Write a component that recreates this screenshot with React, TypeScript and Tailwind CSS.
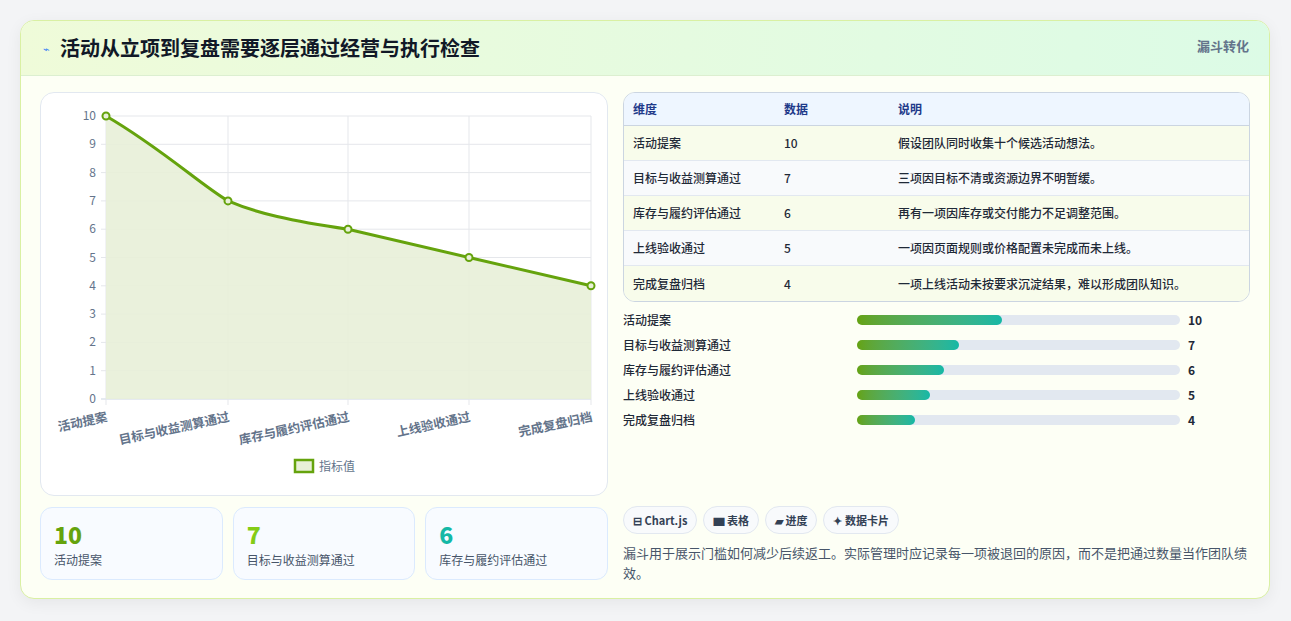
const F = { fontFamily: '"Noto Sans CJK SC","Noto Sans",sans-serif' };
const rows = [
  ["活动提案", 10, "假设团队同时收集十个候选活动想法。"],
  ["目标与收益测算通过", 7, "三项因目标不清或资源边界不明暂缓。"],
  ["库存与履约评估通过", 6, "再有一项因库存或交付能力不足调整范围。"],
  ["上线验收通过", 5, "一项因页面规则或价格配置未完成而未上线。"],
  ["完成复盘归档", 4, "一项上线活动未按要求沉淀结果，难以形成团队知识。"],
] as const;

function Chart() {
  const xs = [65, 187, 307, 428, 550];
  const y0 = 306, step = 28.3;
  const pts = rows.map((r, i) => [xs[i], y0 - (r[1] as number) * step]);
  const line = `M${pts[0][0]},${pts[0][1]} C120,55 160,92 ${pts[1][0]},${pts[1][1]} C215,120 250,128 ${pts[2][0]},${pts[2][1]} L${pts[3][0]},${pts[3][1]} L${pts[4][0]},${pts[4][1]}`;
  return (
    <svg width="568" height="404" className="block">
      {Array.from({ length: 11 }, (_, i) => (
        <g key={i}>
          <line x1="60" x2="550" y1={y0 - i * step} y2={y0 - i * step} stroke={i === 0 ? "#cbd5e1" : "#e5e7eb"} />
          <text x="55" y={y0 - i * step + 4} textAnchor="end" fontSize="12" fill="#64748b" style={F}>{i}</text>
        </g>
      ))}
      {xs.map((x) => <line key={x} x1={x} x2={x} y1={23} y2={y0 + 6} stroke="#e5e7eb" />)}
      <path d={`${line} L550,${y0} L65,${y0} Z`} fill="#e8f0d8" opacity="0.9" />
      <path d={line} fill="none" stroke="#65a30d" strokeWidth="3" />
      {pts.map(([x, y], i) => <circle key={i} cx={x} cy={y} r="3.5" fill="#e8f0d8" stroke="#65a30d" strokeWidth="2" />)}
      {rows.map((r, i) => (
        <text key={i} x={xs[i] + 2} y={y0 + 22} textAnchor="end" fontSize="12.5" fontWeight="600" fill="#64748b" style={F}
          transform={`rotate(-12 ${xs[i] + 2} ${y0 + 22})`}>{r[0]}</text>
      ))}
      <rect x="254" y="367" width="18" height="12" fill="#e8f0d8" stroke="#65a30d" strokeWidth="2.5" />
      <text x="278" y="378" fontSize="12" fill="#64748b" style={F}>指标值</text>
    </svg>
  );
}

export default function App() {
  return (
    <div className="w-[1291px] h-[621px] bg-[#f3f4f6] pt-[20px] px-[20px]" style={F}>
      <div className="w-[1250px] h-[579px] rounded-[14px] border border-[#d9f0a3] bg-[#fdfff5] shadow-[0_4px_16px_rgba(0,0,0,0.06)] overflow-hidden">
        <div className="h-[55px] flex items-center justify-between pl-[22px] pr-5 border-b border-[#dcefd0] bg-gradient-to-r from-[#effbd9] to-[#dcfbe6]">
          <div className="flex items-center gap-[10px]">
            <span className="text-[#3b82f6] text-[11px]">⌁</span>
            <span className="text-[20px] font-bold text-[#111827]">活动从立项到复盘需要逐层通过经营与执行检查</span>
          </div>
          <span className="self-start mt-[15px] text-[13px] font-semibold text-[#64748b]">漏斗转化</span>
        </div>
        <div className="flex gap-[15px] px-[19px] pt-[16px]">
          <div className="w-[568px]">
            <div className="h-[404px] rounded-[14px] border border-[#e2e8f0] bg-white"><Chart /></div>
            <div className="grid grid-cols-3 gap-[10px] mt-[11px]">
              {[["10", "text-[#65a30d]", "活动提案"], ["7", "text-[#84cc16]", "目标与收益测算通过"], ["6", "text-[#14b8a6]", "库存与履约评估通过"]].map(([v, c, l]) => (
                <div key={l} className="h-[73px] rounded-[12px] border border-[#dbeafe] bg-[#f8fbff] px-[13px] pt-[12px]">
                  <div className={`text-[23px] font-extrabold leading-[28px] ${c}`}>{v}</div>
                  <div className="text-[12px] text-[#475569] mt-[3px]">{l}</div>
                </div>
              ))}
            </div>
          </div>
          <div className="w-[628px] flex flex-col">
            <div className="rounded-[12px] border border-[#cbd5e1] overflow-hidden">
              <div className="h-[33px] flex items-center bg-[#eef6ff] border-b border-[#cbd5e1] text-[12px] font-semibold text-[#1e3a8a]">
                <span className="w-[160px] pl-[9px]">维度</span><span className="w-[114px]">数据</span><span>说明</span>
              </div>
              {rows.map((r, i) => (
                <div key={i} className={`h-[35px] flex items-center text-[12px] font-medium text-[#1f2937] ${i < 4 ? "border-b border-[#e2e8f0]" : ""} ${i % 2 ? "bg-[#f8fafc]" : "bg-[#f8fceb]"}`}>
                  <span className="w-[160px] pl-[9px]">{r[0]}</span><span className="w-[114px]">{r[1]}</span><span>{r[2]}</span>
                </div>
              ))}
            </div>
            <div className="mt-[9px] flex flex-col gap-[7px]">
              {rows.map((r, i) => (
                <div key={i} className="h-[18px] flex items-center text-[12px] font-medium text-[#1f2937]">
                  <span className="w-[234px]">{r[0]}</span>
                  <div className="w-[323px] h-[10px] rounded-full bg-[#e2e8f0]">
                    <div className="h-full rounded-full bg-gradient-to-r from-[#65a30d] to-[#14b8a6]" style={{ width: `${(r[1] as number) * 4.5}%` }} />
                  </div>
                  <span className="ml-[8px] font-bold">{r[1]}</span>
                </div>
              ))}
            </div>
            <div className="mt-[77px] flex gap-[6px]">
              {["⊟ Chart.js", "▆ 表格", "▰ 进度", "✦ 数据卡片"].map((t) => (
                <span key={t} className="h-[28px] px-[9px] flex items-center rounded-full border border-[#e2e8f0] bg-[#f8fafc] text-[11px] font-semibold text-[#334155]">{t}</span>
              ))}
            </div>
            <p className="mt-[9px] text-[13px] leading-[20px] text-[#475569] pr-[2px]">漏斗用于展示门槛如何减少后续返工。实际管理时应记录每一项被退回的原因，而不是把通过数量当作团队绩效。</p>
          </div>
        </div>
      </div>
    </div>
  );
}
